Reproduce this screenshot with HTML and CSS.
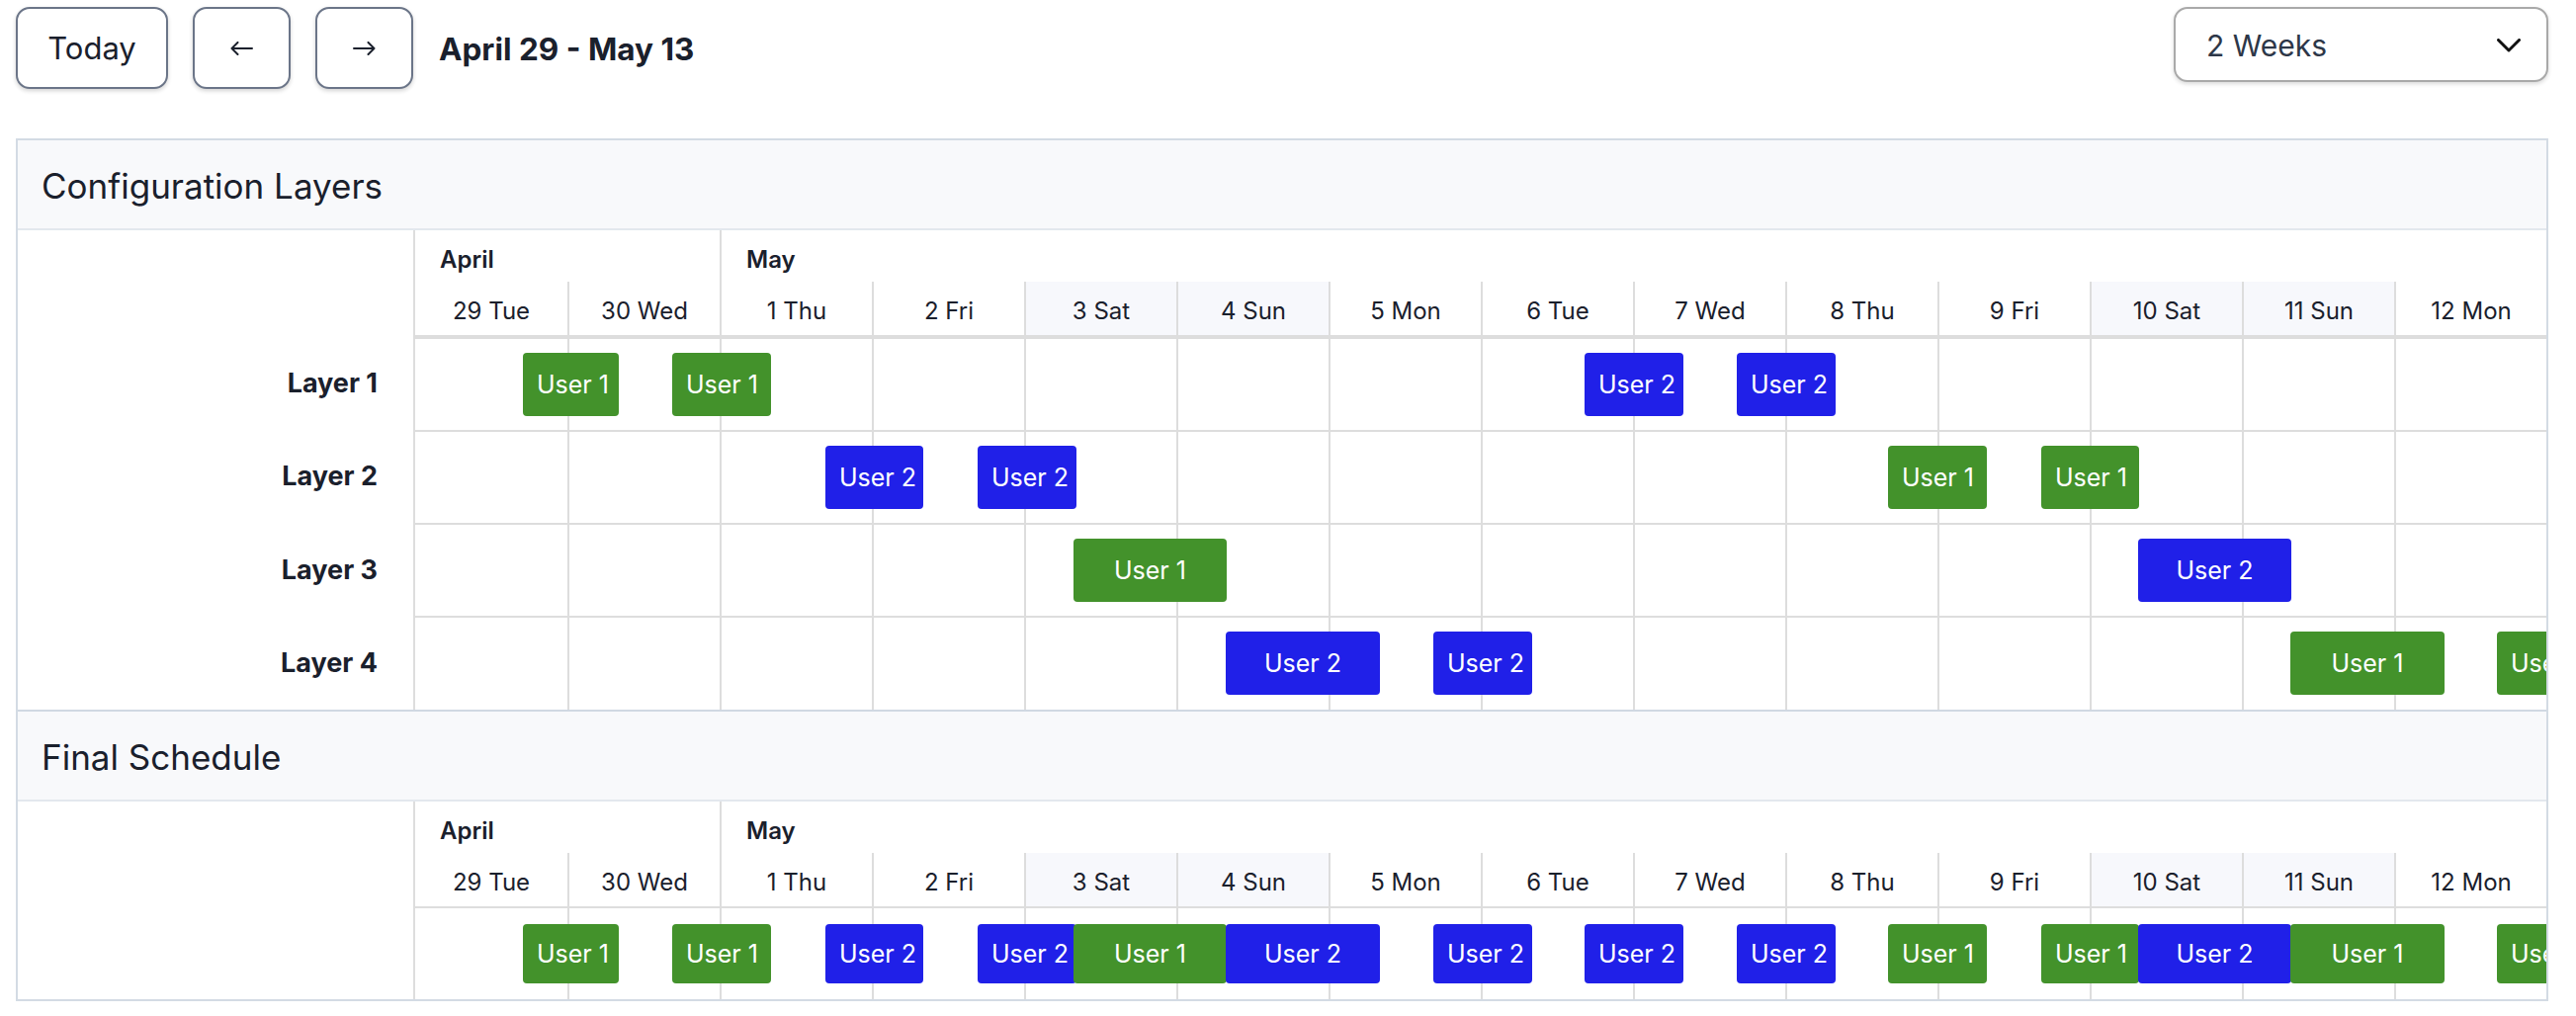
FILE: index.html
```html
<!DOCTYPE html>
<html lang="en">
<head>
<meta charset="utf-8">
<title>Schedule</title>
<link rel="stylesheet" href="styles.css">
</head>
<body>
<div class="page">
  <div class="toolbar">
    <div class="nav">
      <div class="btn btn-today">Today</div>
      <div class="btn btn-icon">
        <svg class="arrow" width="23" height="14" viewBox="0 0 23 14"><path d="M22 7H1.5M7.5 1L1.5 7l6 6"/></svg>
      </div>
      <div class="btn btn-icon">
        <svg class="arrow" width="23" height="14" viewBox="0 0 23 14"><path d="M1 7h20.5M15.5 1l6 6-6 6"/></svg>
      </div>
      <div class="range">April 29 - May 13</div>
    </div>
    <div class="select">
      <span>2 Weeks</span>
      <svg class="chevron" width="24" height="14" viewBox="0 0 24 14"><path d="M1.5 1.5L12 12 22.5 1.5"/></svg>
    </div>
  </div>

  <div class="panel">
    <section class="section">
      <div class="section-title">Configuration Layers</div>
      <div class="row">
        <div class="corner"></div>
        <div class="head">
          <div class="months"><div class="month">April</div><div class="month">May</div></div>
          <div class="days">
            <div class="day">29 Tue</div><div class="day">30 Wed</div><div class="day">1 Thu</div><div class="day">2 Fri</div><div class="day weekend">3 Sat</div><div class="day weekend">4 Sun</div><div class="day">5 Mon</div><div class="day">6 Tue</div><div class="day">7 Wed</div><div class="day">8 Thu</div><div class="day">9 Fri</div><div class="day weekend">10 Sat</div><div class="day weekend">11 Sun</div><div class="day">12 Mon</div>
          </div>
        </div>
      </div>
      <div class="row">
        <div class="label">Layer 1</div>
        <div class="track">
          <i></i><i></i><i></i><i></i><i></i><i></i><i></i><i></i><i></i><i></i><i></i><i></i><i></i><i></i>
          <div class="bar u1" style="left:109px;width:97px">User 1</div>
          <div class="bar u1" style="left:260px;width:100px">User 1</div>
          <div class="bar u2" style="left:1183px;width:100px">User 2</div>
          <div class="bar u2" style="left:1337px;width:100px">User 2</div>
        </div>
      </div>
      <div class="row">
        <div class="label">Layer 2</div>
        <div class="track">
          <i></i><i></i><i></i><i></i><i></i><i></i><i></i><i></i><i></i><i></i><i></i><i></i><i></i><i></i>
          <div class="bar u2" style="left:415px;width:99px">User 2</div>
          <div class="bar u2" style="left:569px;width:100px">User 2</div>
          <div class="bar u1" style="left:1490px;width:100px">User 1</div>
          <div class="bar u1" style="left:1645px;width:99px">User 1</div>
        </div>
      </div>
      <div class="row">
        <div class="label">Layer 3</div>
        <div class="track">
          <i></i><i></i><i></i><i></i><i></i><i></i><i></i><i></i><i></i><i></i><i></i><i></i><i></i><i></i>
          <div class="bar u1" style="left:666px;width:155px">User 1</div>
          <div class="bar u2" style="left:1743px;width:155px">User 2</div>
        </div>
      </div>
      <div class="row">
        <div class="label">Layer 4</div>
        <div class="track">
          <i></i><i></i><i></i><i></i><i></i><i></i><i></i><i></i><i></i><i></i><i></i><i></i><i></i><i></i>
          <div class="bar u2" style="left:820px;width:156px">User 2</div>
          <div class="bar u2" style="left:1030px;width:100px">User 2</div>
          <div class="bar u1" style="left:1897px;width:156px">User 1</div>
          <div class="bar u1" style="left:2106px;width:100px">User 1</div>
        </div>
      </div>
    </section>

    <section class="section">
      <div class="section-title">Final Schedule</div>
      <div class="row">
        <div class="corner"></div>
        <div class="head">
          <div class="months"><div class="month">April</div><div class="month">May</div></div>
          <div class="days">
            <div class="day">29 Tue</div><div class="day">30 Wed</div><div class="day">1 Thu</div><div class="day">2 Fri</div><div class="day weekend">3 Sat</div><div class="day weekend">4 Sun</div><div class="day">5 Mon</div><div class="day">6 Tue</div><div class="day">7 Wed</div><div class="day">8 Thu</div><div class="day">9 Fri</div><div class="day weekend">10 Sat</div><div class="day weekend">11 Sun</div><div class="day">12 Mon</div>
          </div>
        </div>
      </div>
      <div class="row">
        <div class="label"></div>
        <div class="track final">
          <i></i><i></i><i></i><i></i><i></i><i></i><i></i><i></i><i></i><i></i><i></i><i></i><i></i><i></i>
          <div class="bar u1" style="left:109px;width:97px">User 1</div>
          <div class="bar u1" style="left:260px;width:100px">User 1</div>
          <div class="bar u2" style="left:415px;width:99px">User 2</div>
          <div class="bar u2" style="left:569px;width:100px">User 2</div>
          <div class="bar u1" style="left:666px;width:155px">User 1</div>
          <div class="bar u2" style="left:820px;width:156px">User 2</div>
          <div class="bar u2" style="left:1030px;width:100px">User 2</div>
          <div class="bar u2" style="left:1183px;width:100px">User 2</div>
          <div class="bar u2" style="left:1337px;width:100px">User 2</div>
          <div class="bar u1" style="left:1490px;width:100px">User 1</div>
          <div class="bar u1" style="left:1645px;width:99px">User 1</div>
          <div class="bar u2" style="left:1743px;width:155px">User 2</div>
          <div class="bar u1" style="left:1897px;width:156px">User 1</div>
          <div class="bar u1" style="left:2106px;width:100px">User 1</div>
        </div>
      </div>
    </section>
  </div>
</div>
</body>
</html>
```

FILE: styles.css
```css
* { box-sizing: border-box; }

html, body {
  margin: 0;
  padding: 0;
  background: #ffffff;
}

body {
  font-family: Inter, "Noto Sans", "Liberation Sans", sans-serif;
  color: #1a202c;
}

.page {
  padding: 7px 28px 0 16px;
}

/* Toolbar */
.toolbar {
  display: flex;
  justify-content: space-between;
  align-items: flex-start;
  height: 83px;
  margin-bottom: 49.5px;
}

.nav {
  display: flex;
  align-items: center;
  gap: 25px;
}

.btn {
  height: 83px;
  border: 2px solid #6b7588;
  border-radius: 14px;
  background: #ffffff;
  box-shadow: 0 2px 4px rgba(0, 0, 0, 0.18);
  display: flex;
  align-items: center;
  justify-content: center;
  font-size: 31px;
  color: #1a202c;
}

.btn-today { width: 154px; }
.btn-icon { width: 99px; }

.arrow path {
  fill: none;
  stroke: #1a202c;
  stroke-width: 2;
  stroke-linecap: round;
  stroke-linejoin: round;
}

.range {
  font-size: 31.5px;
  font-weight: 700;
  margin-left: 1px;
  padding-top: 2px;
}

.select {
  width: 379px;
  height: 76px;
  border: 2px solid #a9a9a9;
  border-radius: 14px;
  background: #ffffff;
  box-shadow: 0 2px 4px rgba(0, 0, 0, 0.15);
  display: flex;
  align-items: center;
  justify-content: space-between;
  padding: 2px 26px 0 31px;
  font-size: 30px;
  color: #2d3748;
}

.chevron path {
  fill: none;
  stroke: #111111;
  stroke-width: 3;
  stroke-linecap: round;
  stroke-linejoin: round;
}

/* Panel */
.panel {
  border: 2px solid #d3dbe4;
  overflow: hidden;
}

.section-title {
  height: 91px;
  border-bottom: 2px solid #e3e8ee;
  background: #f8f9fb;
  display: flex;
  align-items: center;
  padding: 4px 0 0 24px;
  font-size: 35px;
}

.section + .section .section-title {
  border-top: 2.5px solid #d0d8e2;
  height: 93.5px;
}

.row {
  display: grid;
  grid-template-columns: 402px 1fr;
}

.corner,
.label {
  border-right: 2px solid #dddddd;
}

.label {
  display: flex;
  align-items: center;
  justify-content: flex-end;
  padding-right: 36px;
  font-size: 27px;
  font-weight: 700;
}

.months {
  display: grid;
  grid-template-columns: 2fr 12fr;
  height: 52px;
}

.month {
  padding: 15px 0 0 25px;
  font-size: 24px;
  line-height: 29px;
  font-weight: 600;
}

.month + .month { border-left: 2px solid #dddddd; }

.days {
  display: grid;
  grid-template-columns: repeat(14, 1fr);
  height: 56px;
  border-bottom: 2px solid #dddddd;
}

.day {
  display: flex;
  align-items: center;
  justify-content: center;
  padding-top: 5px;
  font-size: 24px;
}

.day + .day { border-left: 2px solid #dddddd; }

.weekend { background: #f7f8fc; }

.track {
  position: relative;
  height: 92.3px;
  display: grid;
  grid-template-columns: repeat(14, 1fr);
  overflow: hidden;
}

.row + .row .track {
  height: 94.3px;
  border-top: 2px solid #dddddd;
}

.track i + i { border-left: 2px solid #dddddd; }

.section + .section .row + .row .track {
  height: 92px;
  border-top: 0;
}

.bar {
  position: absolute;
  top: 14px;
  height: 64px;
  line-height: 64px;
  padding: 0 14px;
  border-radius: 4px;
  color: #ffffff;
  font-size: 25px;
  text-align: center;
  white-space: nowrap;
  overflow: hidden;
}

.final .bar {
  top: 16px;
  height: 60px;
  line-height: 60px;
}

.u1 { background: #43922b; }
.u2 { background: #2020e8; }
```
